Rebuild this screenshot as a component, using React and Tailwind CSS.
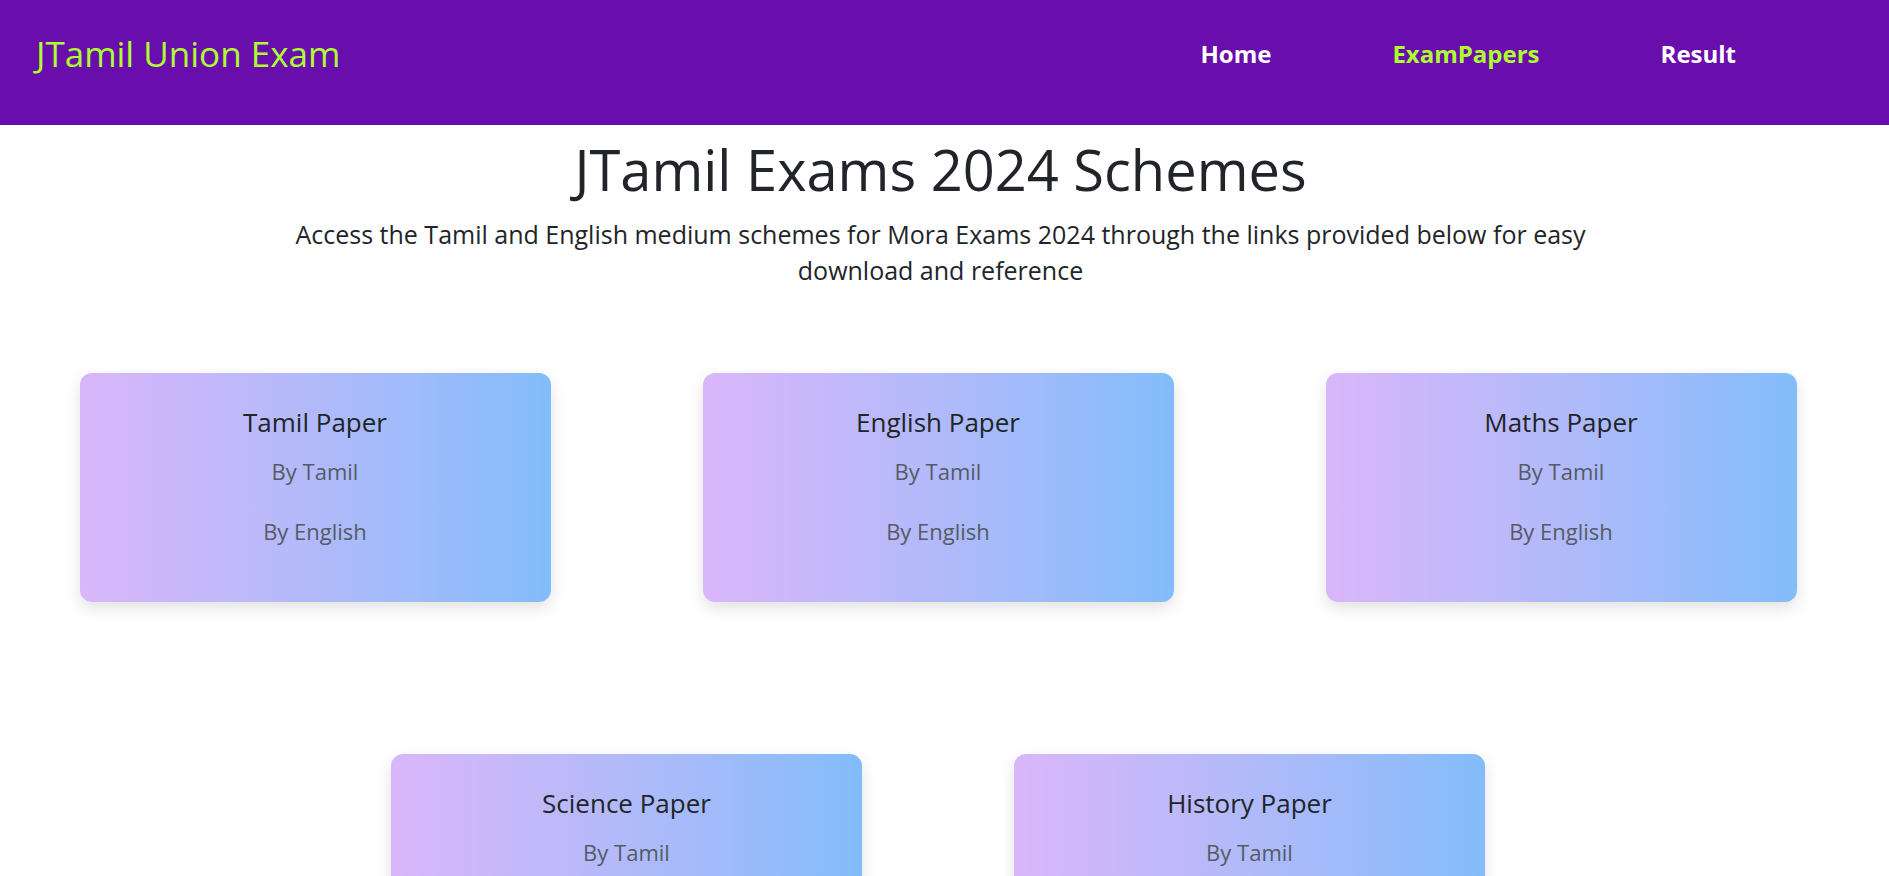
import React from 'react';

const papers = [
  { id: 1, title: 'Tamil Paper' },
  { id: 2, title: 'English Paper' },
  { id: 3, title: 'Maths Paper' },
  { id: 4, title: 'Science Paper' },
  { id: 5, title: 'History Paper' },
];

const navLinks = [
  { label: 'Home', active: false },
  { label: 'ExamPapers', active: true },
  { label: 'Result', active: false },
];

const PaperCard = ({ title }) => (
  <div className="w-[471px] m-[76px] rounded-xl bg-gradient-to-r from-[#d9b6fa] to-[#82bcfa] shadow-[0_6px_16px_rgba(0,0,0,0.12)] text-center pt-[30px] pb-[54px]">
    <h3 className="text-[26px] leading-[39px] text-[#212529]">{title}</h3>
    <p className="mt-[13px] text-[22px] leading-[33px] text-[#555b66]">By Tamil</p>
    <p className="mt-[27px] text-[22px] leading-[33px] text-[#555b66]">By English</p>
  </div>
);

const App = () => {
  return (
    <div className="min-h-screen bg-white font-['Open_Sans',sans-serif]">
      {/* Top navigation bar */}
      <header className="h-[125px] bg-[#6a0dad] flex items-start justify-between pl-[36px] pr-[153px]">
        <h1 className="pt-[27px] text-[35px] leading-[54px] text-[#adff2f]">JTamil Union Exam</h1>
        <nav className="pt-[36px] flex gap-[121px]">
          {navLinks.map(link => (
            <a
              key={link.label}
              href="#"
              className={`text-[24px] leading-[36px] font-bold ${link.active ? 'text-[#adff2f]' : 'text-white'}`}
            >
              {link.label}
            </a>
          ))}
        </nav>
      </header>

      <main className="flex flex-col items-center pr-[8px]">
        <h2 className="mt-[8px] text-[56px] leading-[72px] text-[#212529]">JTamil Exams 2024 Schemes</h2>
        <p className="mt-[11px] max-w-[1330px] text-center text-[25px] leading-[36px] text-[#212529]">
          Access the Tamil and English medium schemes for Mora Exams 2024 through the links provided below for easy download and reference
        </p>

        <div className="mt-[9px] flex flex-wrap justify-center w-full pr-[5px]">
          {papers.map(paper => (
            <PaperCard key={paper.id} title={paper.title} />
          ))}
        </div>
      </main>
    </div>
  );
};

export default App;
